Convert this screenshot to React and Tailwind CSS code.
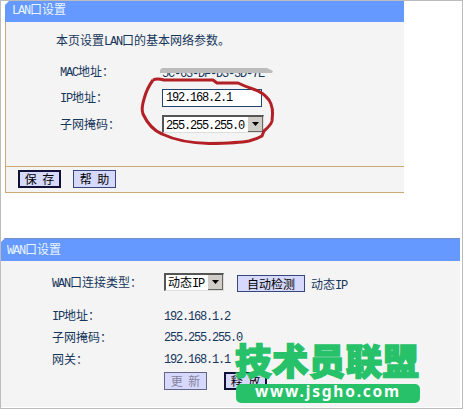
import { Fragment } from 'react';

// Los caracteres latinos ocupan media celda (6px) y los chinos una celda (12px)
function Texto({ children }) {
  return children.split(/([\x20-\x7e]+)/).map((t, i) => (
    <Fragment key={i}>
      {i % 2 ? <span className="font-['Liberation_Mono',monospace] tracking-[-1.2px]">{t}</span> : t}
    </Fragment>
  ));
}

function Boton({ children, className }) {
  return (
    <button className={`flex items-center justify-center whitespace-pre bg-[#d6d9fb] leading-none [word-spacing:3px] ${className}`}>
      {children}
    </button>
  );
}

function Selector({ valor, className }) {
  return (
    <div className={`flex h-[18px] items-center border-t-2 border-l-2 border-t-[#555] border-l-[#555] border-r border-b border-r-[#ddd] border-b-[#ddd] bg-white pl-0.5 text-black ${className}`}>
      <span className="flex-1 whitespace-nowrap"><Texto>{valor}</Texto></span>
      <span className="flex h-full w-[15px] items-center justify-center border-r border-b border-[#666] bg-[#d0cdc8]">
        <svg width="7" height="4" viewBox="0 0 7 4"><path d="M0 0h7L3.5 4z" fill="#000" /></svg>
      </span>
    </div>
  );
}

function Cabecera({ children, className }) {
  return (
    <div className={`bg-[#6699ff] text-[#e9f5ff] [clip-path:polygon(4px_0,100%_0,100%_100%,0_100%,0_4px)] ${className}`}>
      <Texto>{children}</Texto>
    </div>
  );
}

const estadoWan = [
  { nombre: 'IP地址：', valor: '192.168.1.2', alto: 'h-[21px]' },
  { nombre: '子网掩码：', valor: '255.255.255.0', alto: 'h-[22px]' },
  { nombre: '网关：', valor: '192.168.1.1', alto: 'h-[21px]' },
];

function PanelLan() {
  return (
    <section className="ml-1 h-[192px] w-[399px]">
      <Cabecera className="h-[21px] pl-[7px] leading-[15px]">LAN口设置</Cabecera>
      <div className="h-[171px] border-b border-l border-[#cda974] bg-[#f4f4f4]">
        <div className="h-[145px] border-b border-[#cda974] pt-[9px] pl-[54px]">
          <p className="-ml-1 h-[18px] leading-[18px]"><Texto>本页设置LAN口的基本网络参数。</Texto></p>
          <div className="mt-[14px] flex h-[18px] items-center">
            <span className="w-[102px]"><Texto>MAC地址：</Texto></span>
            <span className="pt-0.5"><Texto>5C-63-DF-D3-3D-7E</Texto></span>
          </div>
          <div className="mt-2 flex h-[18px] items-center">
            <span className="w-[102px]"><Texto>IP地址：</Texto></span>
            <div className="flex h-[18px] w-[100px] items-center border border-[#24436d] bg-white pl-[3px] text-black">
              <Texto>192.168.2.1</Texto>
            </div>
          </div>
          <div className="mt-2 flex h-[18px] items-center">
            <span className="w-[102px]"><Texto>子网掩码：</Texto></span>
            <Selector valor="255.255.255.0" className="w-[102px]" />
          </div>
        </div>
        <div className="flex gap-3 pt-[3px] pl-3">
          <Boton className="h-[18px] w-[43px] border-2 border-[#101039] text-black">保 存</Boton>
          <Boton className="h-[18px] w-[43px] border border-[#35477d] text-black">帮 助</Boton>
        </div>
      </div>
    </section>
  );
}

function PanelWan() {
  return (
    <section className="mt-[45px] w-[459px]">
      <Cabecera className="h-[23px] border-t border-[#7490c4] pl-[6px] leading-[19px]">WAN口设置</Cabecera>
      <div className="h-[146px] bg-[#f4f4f4] pt-3 pl-[51px]">
        <div className="flex h-[20px] items-start">
          <span className="w-[112px] leading-[18px]"><Texto>WAN口连接类型：</Texto></span>
          <Selector valor="动态IP" className="w-[60px]" />
          <Boton className="mt-[2px] ml-[13px] h-[17px] w-[68px] border border-[#35477d] text-black">自动检测</Boton>
          <span className="ml-1.5 pt-[2px] leading-[18px]"><Texto>动态IP</Texto></span>
        </div>
        <div className="mt-[12px]">
          {estadoWan.map(f => (
            <div key={f.nombre} className={`flex items-center ${f.alto}`}>
              <span className="w-[112px]"><Texto>{f.nombre}</Texto></span>
              <span><Texto>{f.valor}</Texto></span>
            </div>
          ))}
        </div>
        <div className="mt-[3px] flex gap-[17px] pl-[112px]">
          <Boton className="h-[18px] w-[43px] border border-[#626785] text-[#85829b]">更 新</Boton>
          <Boton className="h-[18px] w-[43px] border-2 border-[#101039] text-black">释 放</Boton>
        </div>
      </div>
    </section>
  );
}

// Trazo rojo y tachado de la MAC sobre el formulario
function Anotaciones() {
  return (
    <svg className="absolute top-0 left-0" width="463" height="200" viewBox="0 0 463 200" fill="none">
      <path d="M162 66H264V69H162Z" fill="#f4f4f4" />
      <path d="M162 68H267L273 71L272 73H160V70Z" fill="#bcbcbc" />
      <path
        d="M153 80Q147 88 144 99Q141 109 143 114Q150 129 162 134Q181 143 209 143.500Q239 143 249 141Q257 139 262 136L264 131Q271 125 272 121Q274 107 269 100Q263 92 253 89Q244 86 238 83L217 83L213 80Q190 80 164 80Q157 78 153 80"
        stroke="#b22026" strokeWidth="3" strokeLinejoin="round"
      />
    </svg>
  );
}

function Marca() {
  return (
    <div className="absolute top-[343px] left-[236px] w-[184px]">
      <svg className="block overflow-visible" width="184" height="38" viewBox="0 0 184 38">
        <text
          x="-1" y="32" textLength="184" fontSize="36.5" fontWeight="900" fill="#27c169" stroke="#27c169" strokeWidth="1.4"
          fontFamily="'Noto Sans CJK SC', sans-serif"
        >技术员联盟</text>
      </svg>
      <div className="mt-[3px] flex h-[19px] items-center justify-center rounded-[5px] bg-[#27c169] pb-[3px] font-['Noto_Sans',sans-serif] text-[15.5px] font-bold tracking-[1.8px] text-white">
        www.jsgho.com
      </div>
    </div>
  );
}

function App() {
  return (
    <div className="relative h-[409px] w-[463px] overflow-hidden border border-[#bcbcbc] bg-white font-['Noto_Sans_CJK_SC',sans-serif] text-[12px] leading-none text-[#16365c]">
      <PanelLan />
      <PanelWan />
      <div className="absolute -top-px -left-px">
        <Anotaciones />
        <Marca />
      </div>
    </div>
  );
}

export default App;
